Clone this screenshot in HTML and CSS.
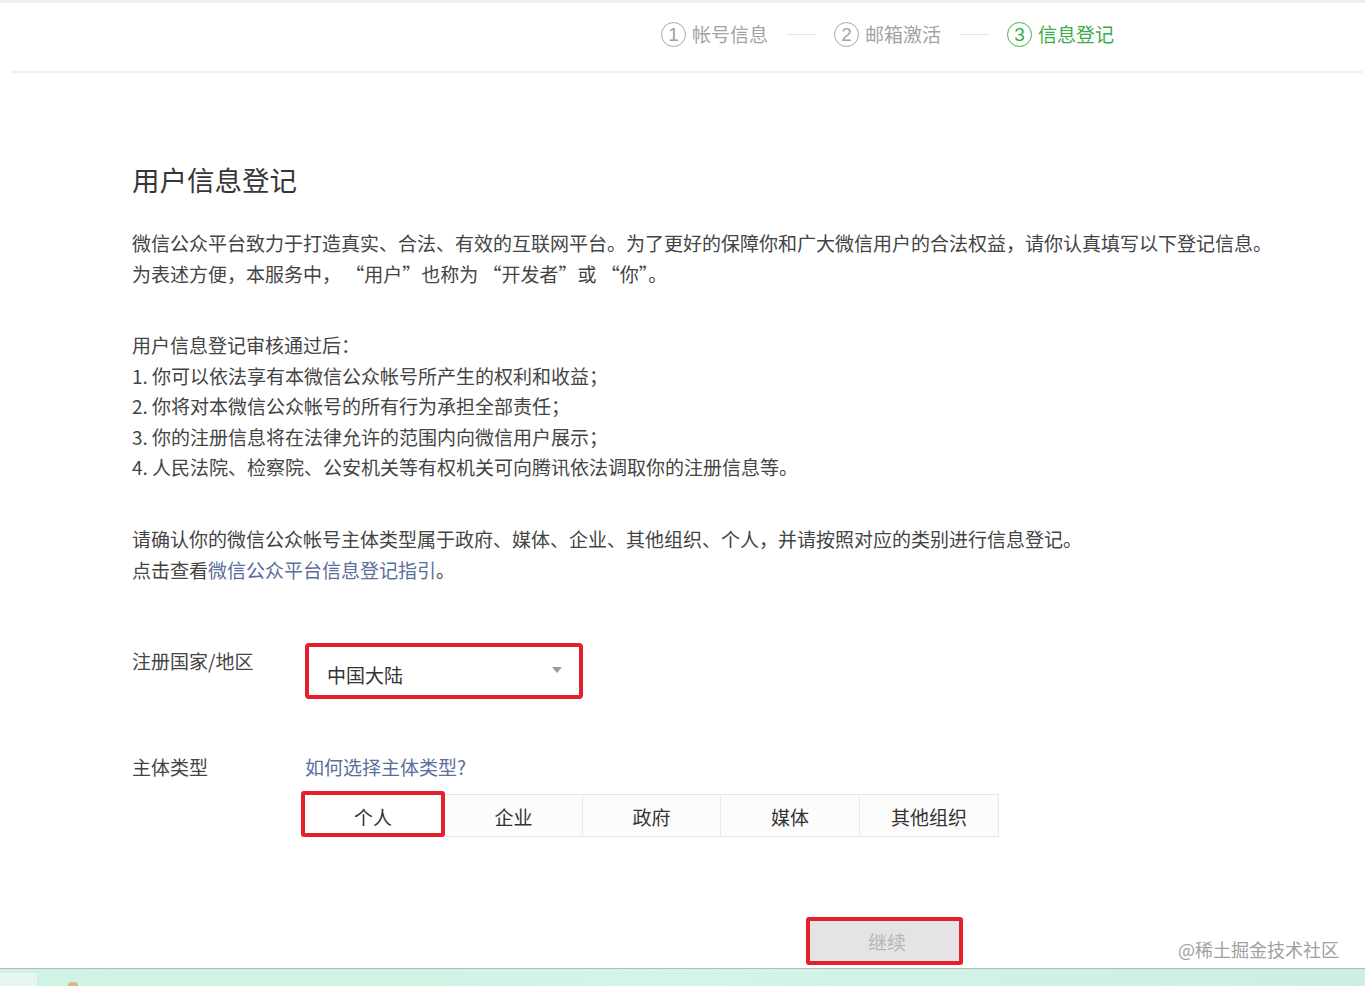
FILE: index.html
```html
<!DOCTYPE html>
<html lang="zh-CN">
<head>
<meta charset="utf-8">
<title>用户信息登记</title>
<link rel="stylesheet" href="styles.css">
</head>
<body>
<div class="page">
  <div class="topstrip"></div>
  <header class="header">
    <ol class="steps">
      <li class="step"><span class="num">1</span><span class="label">帐号信息</span></li>
      <li class="sep"></li>
      <li class="step"><span class="num">2</span><span class="label">邮箱激活</span></li>
      <li class="sep"></li>
      <li class="step current"><span class="num">3</span><span class="label">信息登记</span></li>
    </ol>
  </header>
  <main class="main">
    <h1 class="title">用户信息登记</h1>
    <p class="para first">微信公众平台致力于打造真实、合法、有效的互联网平台。为了更好的保障你和广大微信用户的合法权益，请你认真填写以下登记信息。<br>为表述方便，本服务中， “用户”也称为 “开发者”或 “你”。</p>
    <p class="para">用户信息登记审核通过后：<br>1. 你可以依法享有本微信公众帐号所产生的权利和收益；<br>2. 你将对本微信公众帐号的所有行为承担全部责任；<br>3. 你的注册信息将在法律允许的范围内向微信用户展示；<br>4. 人民法院、检察院、公安机关等有权机关可向腾讯依法调取你的注册信息等。</p>
    <p class="para">请确认你的微信公众帐号主体类型属于政府、媒体、企业、其他组织、个人，并请按照对应的类别进行信息登记。<br>点击查看<a class="link" href="#">微信公众平台信息登记指引</a>。</p>

    <div class="form-row row-country">
      <div class="form-label">注册国家/地区</div>
      <div class="form-field">
        <div class="select"><span>中国大陆</span><i class="arrow"></i></div>
      </div>
    </div>

    <div class="form-row row-type">
      <div class="form-label">主体类型</div>
      <div class="form-field">
        <a class="link help" href="#">如何选择主体类型?</a>
        <div class="segments">
          <div class="seg active">个人</div>
          <div class="seg">企业</div>
          <div class="seg">政府</div>
          <div class="seg wide">媒体</div>
          <div class="seg wide">其他组织</div>
        </div>
      </div>
    </div>

    <div class="actions">
      <button class="btn" type="button">继续</button>
    </div>
  </main>
  <div class="watermark">@稀土掘金技术社区</div>
  <div class="taskbar"><span class="tb-start"></span><span class="tb-icon"></span></div>
</div>
</body>
</html>
```

FILE: styles.css
```css
* { box-sizing: border-box; }
html, body { margin: 0; padding: 0; background: #fff; }
body {
  font-family: "Noto Sans CJK SC", "Microsoft YaHei", "Noto Sans", sans-serif;
  color: #3a3a3a;
}
.page {
  position: relative;
  min-height: 986px;
  display: flex;
  flex-direction: column;
}
.topstrip { height: 3px; background: #efefef; }
.header {
  height: 70px;
  margin: 0 2px 0 12px;
  border-bottom: 2px solid #efefef;
  display: flex;
  justify-content: flex-end;
  align-items: center;
  padding-right: 249px;
  padding-bottom: 6px;
}
.steps {
  list-style: none;
  margin: 0;
  padding: 0;
  display: flex;
  align-items: center;
}
.step {
  display: flex;
  align-items: center;
  color: #a3a3a3;
  font-size: 19px;
  line-height: 26px;
}
.num {
  width: 25px;
  height: 25px;
  border: 1.5px solid #a8a8a8;
  border-radius: 50%;
  display: flex;
  align-items: center;
  justify-content: center;
  font-size: 19px;
  line-height: 1;
  font-family: "Liberation Sans", "Noto Sans", sans-serif;
  margin-right: 6px;
}
.step.current { color: #3daa48; }
.step.current .num { border-color: #43b04d; color: #3daa48; }
.sep {
  width: 29px;
  height: 1px;
  background: #e3e3e3;
  margin: 0 18px 0 19px;
}
.main {
  padding-left: 132px;
}
.title {
  margin: 88px 0 0;
  font-size: 27.5px;
  line-height: 36px;
  font-weight: 400;
  color: #363636;
}
.para {
  margin: 41px 0 0;
  font-size: 19px;
  line-height: 30.6px;
  color: #444;
  white-space: pre;
}
.para.first { margin-top: 30px; line-height: 31px; }
.link { color: #5b6e9c; text-decoration: none; }
.form-row { display: flex; }
.form-label {
  width: 173px;
  flex: none;
  font-size: 19px;
  line-height: 30px;
  color: #444;
}
.row-country { margin-top: 58px; }
.row-country .form-label { padding-top: 3px; }
.select {
  width: 278px;
  height: 56px;
  border: 4px solid #e3202b;
  border-radius: 4px;
  display: flex;
  align-items: center;
  justify-content: space-between;
  padding: 6px 17px 0 18px;
  font-size: 19px;
  color: #333;
}
.arrow {
  width: 0;
  height: 0;
  border-left: 5px solid transparent;
  border-right: 5px solid transparent;
  border-top: 6px solid #9a9a9a;
  margin-top: -8px;
}
.row-type { margin-top: 53px; }
.help {
  display: block;
  font-size: 19px;
  line-height: 30px;
}
.segments {
  display: flex;
  margin: 9px 0 0 -4px;
}
.seg {
  width: 138px;
  height: 43px;
  margin-top: 3px;
  border: 1px solid #e8e8e8;
  border-left: none;
  background: #fcfcfc;
  display: flex;
  align-items: center;
  justify-content: center;
  font-size: 19px;
  color: #333;
  padding-top: 2px;
}
.seg.wide { width: 139px; }
.seg.active {
  width: 144px;
  height: 46px;
  margin-top: 0;
  border: 4px solid #e3202b;
  border-radius: 3px;
  background: #fff;
  padding-top: 4px;
}
.actions {
  margin: 80px 0 0 674px;
}
.btn {
  width: 157px;
  height: 48px;
  border: 4px solid #e3202b;
  border-radius: 3px;
  background: #e4e4e6;
  color: #b6b6b6;
  font-family: inherit;
  font-size: 19px;
  padding: 0 0 0 5px;
  display: block;
}
.watermark {
  position: absolute;
  left: 1178px;
  top: 936px;
  font-size: 18px;
  line-height: 26px;
  color: #a0a0a0;
}
.taskbar {
  margin-top: auto;
  height: 18px;
  border-top: 1px solid #b4b9b6;
  background: linear-gradient(90deg, #cff3e3 0%, #d3f4e6 50%, #cdeee2 100%);
  position: relative;
}
.tb-start {
  position: absolute;
  left: 0;
  top: 4px;
  width: 38px;
  height: 13px;
  background: #e6f7f0;
  border-right: 1px solid #d8ebe3;
}
.tb-icon {
  position: absolute;
  left: 68px;
  top: 13px;
  width: 10px;
  height: 4px;
  background: #d9b78a;
  border-radius: 3px 3px 0 0;
}
```
